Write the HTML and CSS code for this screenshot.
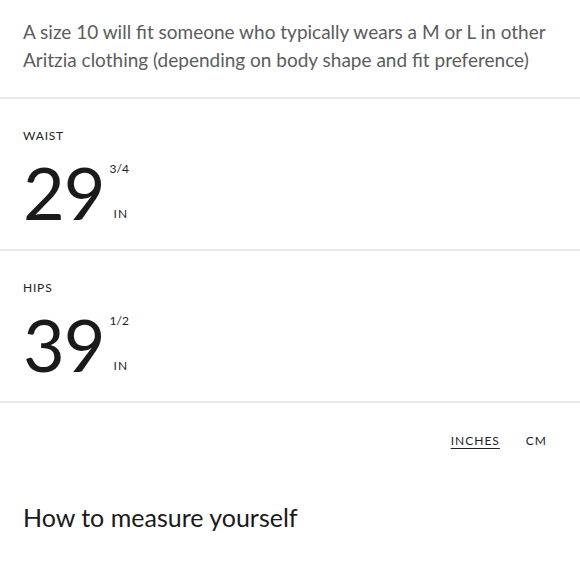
FILE: index.html
```html
<!DOCTYPE html>
<html>
<head>
<meta charset="utf-8">
<link rel="stylesheet" href="styles.css">
</head>
<body>
<div class="page">
  <p class="intro">A size 10 will fit someone who typically wears a M or L in other Aritzia clothing (depending on body shape and fit preference)</p>
  <section class="measure">
    <div class="label">WAIST</div>
    <div class="value">
      <span class="num">29</span>
      <span class="side">
        <span class="frac">3/4</span>
        <span class="unit">IN</span>
      </span>
    </div>
  </section>
  <section class="measure">
    <div class="label">HIPS</div>
    <div class="value">
      <span class="num">39</span>
      <span class="side">
        <span class="frac">1/2</span>
        <span class="unit">IN</span>
      </span>
    </div>
  </section>
  <div class="units">
    <span class="unit-opt active">INCHES</span>
    <span class="unit-opt">CM</span>
  </div>
  <h2 class="howto">How to measure yourself</h2>
</div>
</body>
</html>
```
FILE: styles.css
```css
html, body {
  margin: 0;
  padding: 0;
  background: #fff;
}
body {
  font-family: "Lato", "Inter", sans-serif;
  color: #1e1e1e;
}
.page {
  width: 580px;
}
.intro {
  margin: 0;
  padding: 18px 23px 23px;
  font-size: 19px;
  line-height: 28px;
  color: #5c5c5c;
  border-bottom: 2px solid #e8e8e8;
}
.measure {
  padding: 29px 23px 21px;
  border-bottom: 2px solid #e8e8e8;
}
.label {
  font-size: 12px;
  letter-spacing: 0.8px;
  line-height: 16px;
  color: #222;
}
.value {
  display: flex;
  margin-top: 12px;
}
.num {
  font-size: 72px;
  line-height: 72px;
  letter-spacing: -1px;
  color: #1a1a1a;
}
.side {
  display: flex;
  flex-direction: column;
  justify-content: space-between;
  padding: 6px 0 7px 5px;
  font-size: 12px;
  line-height: 14px;
}
.unit {
  padding-left: 4px;
  letter-spacing: 1px;
}
.units {
  display: flex;
  justify-content: flex-end;
  gap: 26px;
  padding: 30px 33px 0 0;
  font-size: 12px;
  letter-spacing: 1px;
  height: 40px;
}
.unit-opt.active {
  text-decoration: underline;
  text-underline-offset: 3px;
}
.howto {
  margin: 0;
  padding: 29px 23px 0;
  font-size: 25px;
  line-height: 30px;
  font-weight: 400;
  color: #1a1a1a;
}
```
